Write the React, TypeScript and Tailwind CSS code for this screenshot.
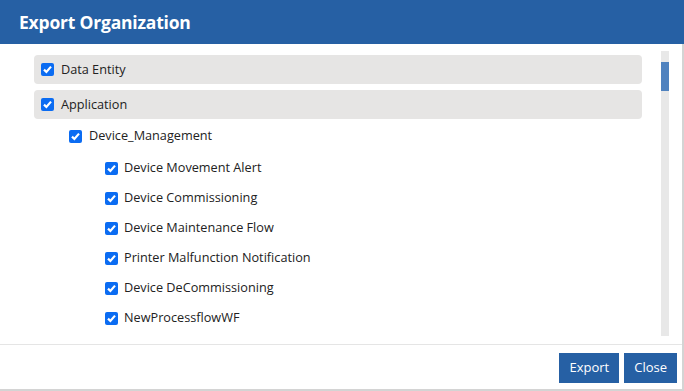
import React from 'react';

const children = [
  'Device Movement Alert',
  'Device Commissioning',
  'Device Maintenance Flow',
  'Printer Malfunction Notification',
  'Device DeCommissioning',
  'NewProcessflowWF',
];

const Check: React.FC = () => (
  <span className="w-[13px] h-[13px] rounded-[2px] bg-[#0b6cf2] flex items-center justify-center shrink-0">
    <svg width="11" height="11" viewBox="0 0 11 11">
      <path d="M2 5.6 L4.4 8 L9 2.6" fill="none" stroke="#fff" strokeWidth="2.2" />
    </svg>
  </span>
);

export default function App() {
  return (
    <div
      className="w-[684px] h-[391px] bg-white flex flex-col text-[#222] overflow-hidden"
      style={{ fontFamily: '"Open Sans", "Noto Sans", sans-serif' }}
    >
      {/* header */}
      <div className="h-[44px] bg-[#2660a4] flex items-center pl-[19px] shrink-0">
        <h2 className="text-white text-[17.5px] font-bold tracking-[-0.2px]">Export Organization</h2>
      </div>

      <div className="flex-1 flex flex-col border-r-2 border-b-2 border-[#d4d4d4]">
        {/* scroll area */}
        <div className="h-[301px] flex border-b border-[#e5e5e5]">
          <div className="flex-1 pl-[34px] pr-[19px] pt-[11px] overflow-hidden">
            <div className="h-[29px] bg-[#e6e5e4] rounded-[4px] flex items-center gap-[7px] pl-[7px] mb-[6px]">
              <Check />
              <span className="text-[12.7px] font-medium">Data Entity</span>
            </div>
            <div className="h-[29px] bg-[#e6e5e4] rounded-[4px] flex items-center gap-[7px] pl-[7px]">
              <Check />
              <span className="text-[12.7px] font-medium">Application</span>
            </div>
            <div className="h-[34px] flex items-center gap-[7px] pl-[35px]">
              <Check />
              <span className="text-[12.7px]">Device_Management</span>
            </div>
            <div className="flex flex-col pl-[71px]">
              {children.map(c => (
                <div key={c} className="h-[30px] flex items-center gap-[6px]">
                  <Check />
                  <span className="text-[12.7px]">{c}</span>
                </div>
              ))}
            </div>
          </div>
          {/* scrollbar */}
          <div className="w-[8px] mr-[13px] mt-[7px] mb-[8px] bg-[#e8e8e8] flex flex-col">
            <div className="h-[11px]" />
            <div className="h-[29px] bg-[#4f82bf]" />
          </div>
        </div>

        {/* footer */}
        <div className="flex-1 flex justify-end items-start gap-[5px] pt-[8px] pr-[5px]">
          <button className="h-[30px] px-[10px] bg-[#2660a4] text-white text-[13px]">Export</button>
          <button className="h-[30px] px-[10px] bg-[#2660a4] text-white text-[13px]">Close</button>
        </div>
      </div>
    </div>
  );
}
